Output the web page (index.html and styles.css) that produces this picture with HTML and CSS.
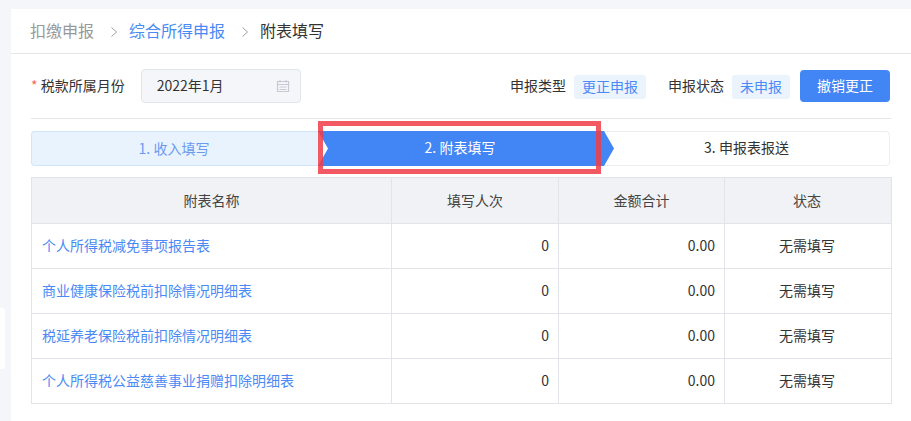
FILE: index.html
```html
<!DOCTYPE html>
<html lang="zh-CN">
<head>
<meta charset="utf-8">
<title>附表填写</title>
<link rel="stylesheet" href="styles.css">
</head>
<body>
<div class="side-tab"></div>
<main class="panel">
  <nav class="crumbs">
    <span class="crumb-root">扣缴申报</span>
    <svg class="chev" width="8" height="12" viewBox="0 0 8 12"><path d="M1.5 1.5 6.5 6 1.5 10.5" fill="none" stroke="#9aa0a8" stroke-width="1"/></svg>
    <span class="crumb-link">综合所得申报</span>
    <svg class="chev" width="8" height="12" viewBox="0 0 8 12"><path d="M1.5 1.5 6.5 6 1.5 10.5" fill="none" stroke="#9aa0a8" stroke-width="1"/></svg>
    <span class="crumb-current">附表填写</span>
  </nav>
  <div class="content">
    <div class="form-row">
      <label class="field-label"><span class="req">*</span> 税款所属月份</label>
      <div class="date-box">
        <span>2022年1月</span>
        <svg width="14" height="14" viewBox="0 0 14 14"><path d="M1.5 2.5h11v10h-11zM1.5 5.5h11M4 1v2.5M10 1v2.5M3.5 8h7M3.5 10.5h7" fill="none" stroke="#c6cbd3" stroke-width="1.2"/></svg>
      </div>
      <div class="status-group">
        <span class="status-label">申报类型</span>
        <span class="tag tag-type">更正申报</span>
        <span class="status-label status-second">申报状态</span>
        <span class="tag">未申报</span>
        <button class="btn" type="button">撤销更正</button>
      </div>
    </div>
    <div class="steps">
      <div class="step step-done">1. 收入填写</div>
      <div class="step step-active">2. 附表填写</div>
      <div class="step step-next">3. 申报表报送</div>
    </div>
    <table class="grid">
      <colgroup><col class="c1"><col class="c2"><col class="c3"><col class="c4"></colgroup>
      <thead>
        <tr><th>附表名称</th><th>填写人次</th><th>金额合计</th><th class="ctr">状态</th></tr>
      </thead>
      <tbody>
        <tr><td><a class="link">个人所得税减免事项报告表</a></td><td class="num">0</td><td class="num">0.00</td><td class="ctr">无需填写</td></tr>
        <tr><td><a class="link">商业健康保险税前扣除情况明细表</a></td><td class="num">0</td><td class="num">0.00</td><td class="ctr">无需填写</td></tr>
        <tr><td><a class="link">税延养老保险税前扣除情况明细表</a></td><td class="num">0</td><td class="num">0.00</td><td class="ctr">无需填写</td></tr>
        <tr><td><a class="link">个人所得税公益慈善事业捐赠扣除明细表</a></td><td class="num">0</td><td class="num">0.00</td><td class="ctr">无需填写</td></tr>
      </tbody>
    </table>
  </div>
</main>
<div class="highlight"></div>
</body>
</html>
```
FILE: styles.css
```css
* { box-sizing: border-box; }
html, body { margin: 0; height: 100%; overflow: hidden; }
body {
  background: #f4f6fa;
  color: #333;
  font: 14px "Noto Sans CJK SC", "Liberation Sans", sans-serif;
  padding: 9px 0 0 11px;
  position: relative;
}
.side-tab {
  position: absolute; left: 0; top: 308px;
  width: 5px; height: 61px;
  background: #fff; border-radius: 0 3px 3px 0;
}
.panel { background: #fff; height: 412px; }
.crumbs {
  height: 45px; padding: 0 0 2px 19px;
  display: flex; align-items: center;
  border-bottom: 1px solid #e4e6ea;
  font-size: 16px; line-height: 22px;
}
.crumb-root { color: #999; }
.crumb-link { color: #4a8af4; }
.crumb-current { color: #333; }
.chev { margin: 3px 11px 0 16px; }
.content { padding: 0 21px 0 20px; }
.form-row {
  height: 65px;
  display: flex; align-items: center;
  border-bottom: 1px solid #e4e6ea;
  padding-bottom: 1px;
  margin-right: -1px;
}
.field-label { color: #333; line-height: 20px; margin-top: -2px; }
.req { color: #f56c4f; }
.date-box {
  margin-left: 16px; width: 160px; height: 34px;
  padding: 0 10px 0 15px;
  display: flex; align-items: center; justify-content: space-between;
  background: #f4f6fa; border: 1px solid #e2e5ea; border-radius: 4px;
}
.date-box span { margin-top: -2px; }
.status-group { margin-left: auto; display: flex; align-items: center; margin-right: 1px; }
.status-label { margin-right: 8px; margin-top: -1px; }
.status-second { margin-left: 22px; }
.tag {
  height: 24px; line-height: 22px; padding: 0 8px; margin-top: 2px;
  background: #ebf3fd; color: #4a8af4; border-radius: 3px;
}
.btn {
  margin-left: 10px; width: 90px; height: 32px; padding: 0 0 2px;
  background: #4285f4; color: #fff; border: 0; border-radius: 4px;
  font: inherit;
}
.steps {
  margin-top: 12px; height: 35px; width: 859px;
  display: flex; background: #fff;
  border: 1px solid #eceef2; border-radius: 4px;
  position: relative;
}
.step { line-height: 31px; text-align: center; }
.step-done {
  width: 287px; margin: -1px 0 -1px -1px; height: 35px; line-height: 33px;
  padding-right: 2px;
  background: #e8f3fe; color: #6c9af0;
  border: 1px solid #d2e5fb; border-right: 0; border-radius: 4px 0 0 4px;
}
.step-active {
  width: 296px; margin: -1px -10px -1px 0; height: 35px; line-height: 33px;
  padding-right: 12px;
  background: #4285f4; color: #fff; position: relative;
  clip-path: polygon(0 0, 286px 0, 296px 50%, 286px 100%, 0 100%, 10px 50%);
}
.step-next { flex: 1; color: #333; }
.grid {
  margin-top: 11px; width: 860px;
  table-layout: fixed; border-collapse: collapse;
  border: 1px solid #e4e6ea;
}
.c1 { width: 360px; }
.c2 { width: 167px; }
.c3 { width: 166px; }
.c4 { width: 167px; }
.grid th, .grid td { border: 1px solid #e2e4ea; padding: 0 9px 2px 10px; height: 45px; font-weight: 400; }
.grid th { background: #f0f2f6; text-align: center; color: #444; height: 46px; padding: 0 10px 1px 10px; }
.grid .ctr { padding-right: 12px; }
.link { color: #4a8af4; }
.num { text-align: right; }
.ctr { text-align: center; }
.highlight {
  position: absolute; left: 318px; top: 121px;
  width: 283px; height: 53px;
  border: 5px solid rgba(240, 60, 70, 0.85);
}
```
